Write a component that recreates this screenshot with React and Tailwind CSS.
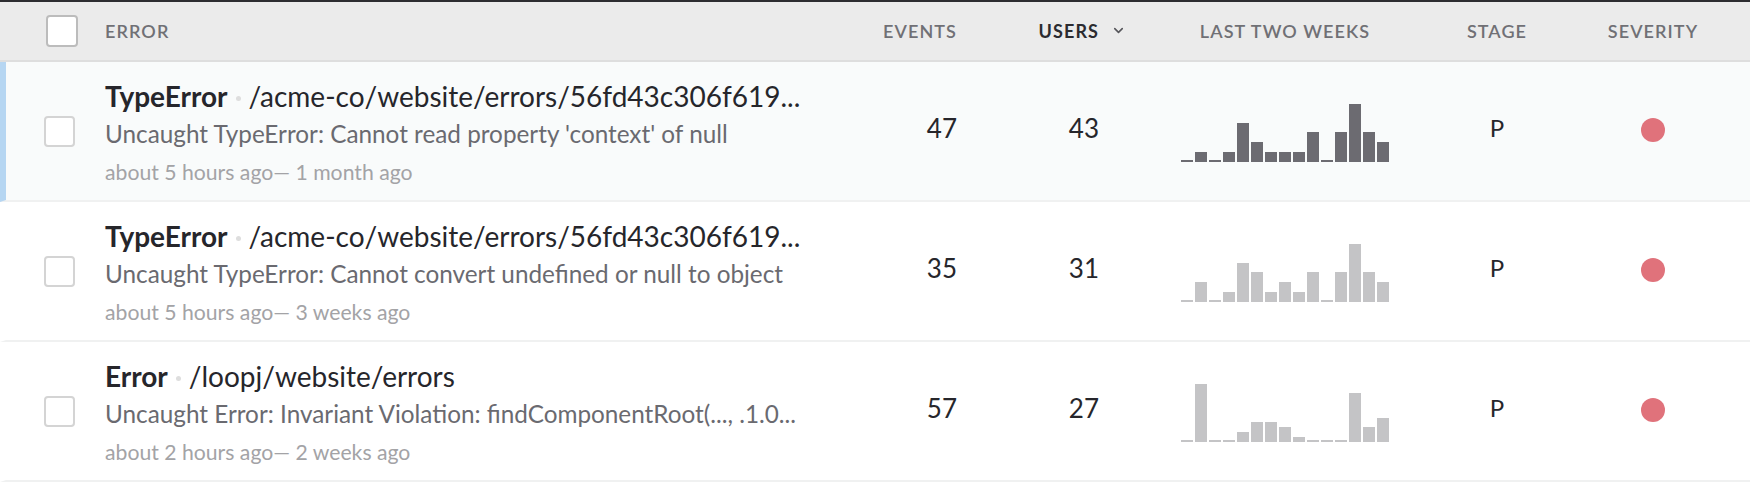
import React from 'react'
import { ChevronDown } from 'lucide-react'

const rows = [
  {
    type: 'TypeError',
    path: '/acme-co/website/errors/56fd43c306f619...',
    message: "Uncaught TypeError: Cannot read property 'context' of null",
    time: 'about 5 hours ago— 1 month ago',
    events: 47,
    users: 43,
    bars: [2, 10, 2, 10, 39, 20, 10, 10, 10, 30, 2, 30, 58, 30, 20],
    selected: true,
  },
  {
    type: 'TypeError',
    path: '/acme-co/website/errors/56fd43c306f619...',
    message: 'Uncaught TypeError: Cannot convert undefined or null to object',
    time: 'about 5 hours ago— 3 weeks ago',
    events: 35,
    users: 31,
    bars: [2, 20, 2, 10, 39, 30, 10, 20, 10, 30, 2, 30, 58, 30, 20],
  },
  {
    type: 'Error',
    path: '/loopj/website/errors',
    message: 'Uncaught Error: Invariant Violation: findComponentRoot(..., .1.0...',
    time: 'about 2 hours ago— 2 weeks ago',
    events: 57,
    users: 27,
    bars: [2, 58, 2, 2, 10, 20, 20, 15, 5, 2, 2, 2, 49, 15, 24],
  },
]

const Sparkline = ({ bars, dark }) => (
  <div className="flex items-end gap-[2px] h-[58px] w-[208px] mt-[4px]">
    {bars.map((h, i) => (
      <div
        key={i}
        className={dark ? 'w-[12px] bg-[#6c6b71]' : 'w-[12px] bg-[#c4c4c6]'}
        style={{ height: h }}
      />
    ))}
  </div>
)

const ErrorRow = ({ row }) => (
  <div
    className={
      'flex items-center h-[140px] border-b-2 border-b-[#f0f1f1] border-l-[6px] ' +
      (row.selected ? 'border-l-[#b6d6f2] bg-[#f9fbfb]' : 'border-l-transparent bg-white')
    }
  >
    <div className="w-[99px] pl-[38px] shrink-0">
      <div className="w-[31px] h-[31px] rounded-[4px] border-2 border-[#d4d4d4] bg-white" />
    </div>

    <div className="w-[740px] shrink-0 self-start pt-[15px]">
      <div className="leading-[38px] text-[28px] text-[#26262b] whitespace-nowrap flex items-center">
        <span className="font-bold">{row.type}</span>
        <span className="w-[5px] h-[5px] rounded-full bg-[#dedede] mx-[8px] mt-[4px]" />
        <span>{row.path}</span>
      </div>
      <div className="leading-[38px] text-[24.3px] text-[#6a6a70] whitespace-nowrap">
        {row.message}
      </div>
      <div className="leading-[38px] text-[21.2px] text-[#a3a3a6] whitespace-nowrap">
        {row.time}
      </div>
    </div>

    <div className="w-[112px] shrink-0 text-right text-[26px] text-[#26262b] mb-[6px]">
      {row.events}
    </div>
    <div className="w-[142px] shrink-0 text-right text-[26px] text-[#26262b] mb-[6px]">
      {row.users}
    </div>
    <div className="w-[82px] shrink-0" />

    <Sparkline bars={row.bars} dark={row.selected} />

    <div className="w-[216px] shrink-0 text-center text-[24px] text-[#26262b] mb-[6px]">
      P
    </div>
    <div className="w-[96px] shrink-0 flex justify-center mb-[3px]">
      <div className="w-[24px] h-[24px] rounded-full bg-[#e0727b]" />
    </div>
  </div>
)

const App = () => {
  return (
    <div className="min-h-screen bg-white font-['Lato',sans-serif]">
      <div className="flex items-center h-[62px] bg-[#ebebeb] border-t-2 border-t-[#2d2d30] border-b-2 border-b-[#dedede] text-[18px] font-semibold uppercase tracking-[0.06em] text-[#707075]">
        <div className="w-[105px] pl-[46px] shrink-0">
          <div className="w-[32px] h-[32px] rounded-[4px] border-2 border-[#bcbcbc] bg-white" />
        </div>
        <div className="w-[740px] shrink-0">Error</div>
        <div className="w-[112px] shrink-0 text-right">Events</div>
        <div className="w-[142px] shrink-0 flex justify-end">
          <span className="relative text-[#2b2b30] font-bold">
            Users
            <ChevronDown
              className="absolute left-full top-[5px] ml-[12px] w-[15px] h-[15px] text-[#55555a]"
              strokeWidth={2.5}
            />
          </span>
        </div>
        <div className="w-[82px] shrink-0" />
        <div className="w-[208px] shrink-0 text-center whitespace-nowrap">Last two weeks</div>
        <div className="w-[216px] shrink-0 text-center">Stage</div>
        <div className="w-[96px] shrink-0 text-center">Severity</div>
      </div>

      {rows.map((row, i) => (
        <ErrorRow key={i} row={row} />
      ))}
    </div>
  )
}

export default App
